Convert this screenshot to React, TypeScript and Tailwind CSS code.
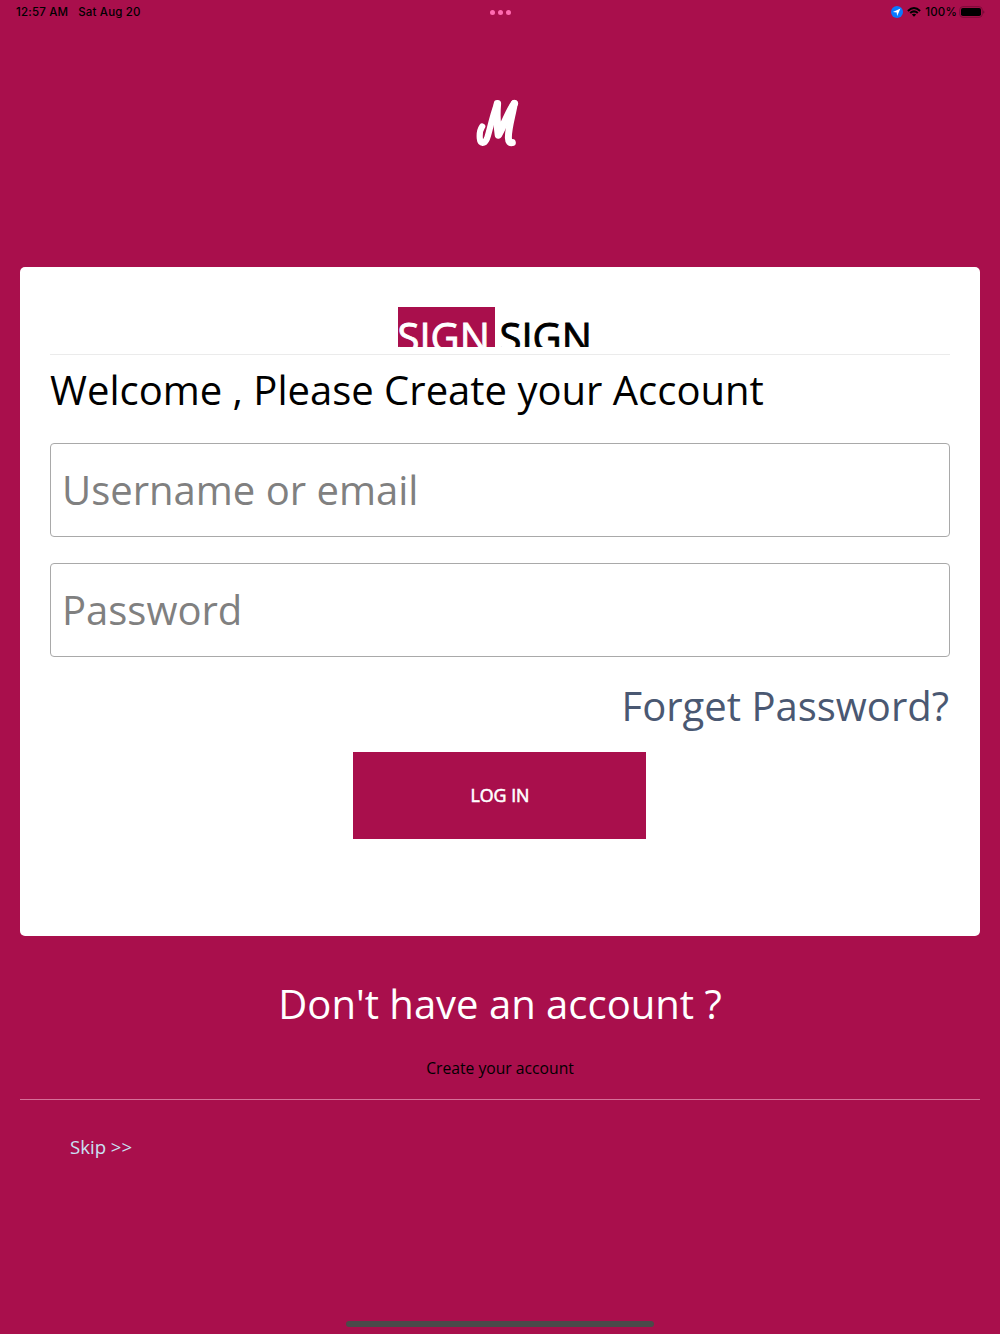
import React from 'react';

function StatusBar() {
  return (
    <header className="grid h-6 grid-cols-3 items-center px-4 font-['Inter'] text-[11.5px] font-medium leading-6 text-black">
      <div className="flex gap-[10px] whitespace-nowrap tracking-[0.18px]">
        <span>12:57 AM</span>
        <span>Sat Aug 20</span>
      </div>
      <div className="flex justify-center gap-[3px] pl-px pt-px">
        <i className="size-[5px] rounded-full bg-[#ff6bb0]" />
        <i className="size-[5px] rounded-full bg-[#ff6bb0]" />
        <i className="size-[5px] rounded-full bg-[#ff6bb0]" />
      </div>
      <div className="flex items-center justify-end">
        <svg className="mr-[4px] size-3" viewBox="0 0 12 12">
          <circle cx="6" cy="6" r="6" fill="#087aff" />
          <path d="M9.5 2.6 1.9 6 5.7 6.4 6.1 10.1Z" fill="#fff" />
        </svg>
        <svg className="mr-[4px] h-[10px] w-[14px]" viewBox="0 0 14 10">
          <path d="M.9 3.9Q7-1.8 13.1 3.9M3.2 6.1Q7 2.7 10.8 6.1" fill="none" stroke="#000" strokeWidth="2" />
          <path d="M4.8 7.5Q7 5.8 9.2 7.5L7 9.8Z" />
        </svg>
        <span className="mr-[2px] tracking-[0.18px]">100%</span>
        <svg className="-mr-px h-3 w-[26px]" viewBox="0 0 26 12">
          <rect x=".7" y=".7" width="22.6" height="10.6" rx="3.2" fill="none" stroke="#7c0b38" />
          <rect x="2" y="2" width="20" height="8" rx="1.8" />
          <path d="M24.4 4.2Q26.4 6 24.4 7.8Z" fill="#65092e" />
        </svg>
      </div>
    </header>
  );
}

function Logo() {
  return (
    <svg className="h-[50px] w-11" viewBox="0 0 44 50" role="img" aria-label="M">
      <g fill="none" stroke="#fff" strokeLinecap="round" strokeLinejoin="round">
        <path strokeWidth="6.2" d="M6.2 28.5C4.1 31.5 3.4 36 3.8 40.5C4.3 46 8.5 46.5 11 40.5C13.5 34 16 19 21 6" />
        <path strokeWidth="7.4" d="M21.4 5.6C20.500 17 21 28 22.4 37L25 32C29 24 33 13 38.3 5.6" />
        <path strokeWidth="7" d="M38.3 5.5C36.5 17 32 31 32.4 40C32.6 44 33.7 45 36.3 44.600" />
      </g>
    </svg>
  );
}

function Field({ label, type }: { label: string; type: string }) {
  return (
    <input
      type={type}
      placeholder={label}
      aria-label={label}
      className="block h-[94px] w-full rounded-[4px] border border-[#a9a9a9] bg-white px-[11px] pb-px text-[40px] placeholder:text-[#808080] placeholder:opacity-100"
    />
  );
}

export default function App() {
  return (
    <main className="flex h-[1334px] w-[1000px] flex-col overflow-hidden bg-[#a90f4c] font-['Open_Sans',sans-serif]">
      <StatusBar />
      <div className="flex h-[243px] justify-center pt-[74px] pr-[5px]">
        <Logo />
      </div>
      <section className="mx-5 h-[669px] rounded-[5px] bg-white px-[30px] pt-10">
        <div className="flex h-[48px] justify-center border-b border-[#ebebeb] pr-[10px] text-[40px] leading-[60px]">
          <div className="h-10 w-[97px] overflow-hidden bg-[#a90f4c] text-white [-webkit-text-stroke:0.9px_white]">SIGN</div>
          <div className="ml-[5px] h-10 w-[93px] overflow-hidden text-black [-webkit-text-stroke:0.9px_black]">SIGN</div>
        </div>
        <h1 className="h-[88px] whitespace-nowrap text-[40px] leading-[70px] text-black">Welcome , Please Create your Account</h1>
        <div className="flex flex-col gap-[26px]">
          <Field label="Username or email" type="text" />
          <Field label="Password" type="password" />
        </div>
        <div className="flex h-[95px] justify-end pr-px">
          <a className="whitespace-nowrap text-[40px] leading-[97px] text-[#4a5872]">Forget Password?</a>
        </div>
        <button className="ml-[303px] block h-[87px] w-[293px] bg-[#a90f4c] pl-px text-[17.8px] text-white [-webkit-text-stroke:0.6px_white]">LOG IN</button>
      </section>
      <section className="mx-5 flex h-[164px] flex-col items-center border-b border-[#d66f98]">
        <p className="mt-[40px] whitespace-nowrap text-[40px] leading-[56px] text-white">Don't have an account ?</p>
        <a className="mt-[24px] text-[15.7px] leading-6 text-black">Create your account</a>
      </section>
      <a className="ml-[70px] mt-[33px] text-[18.6px] leading-7 text-[#cae2f5]">Skip &gt;&gt;</a>
      <div className="mx-auto mt-auto mb-[7px] h-[6px] w-[308px] rounded-full bg-[#4a4a4a]" />
    </main>
  );
}
